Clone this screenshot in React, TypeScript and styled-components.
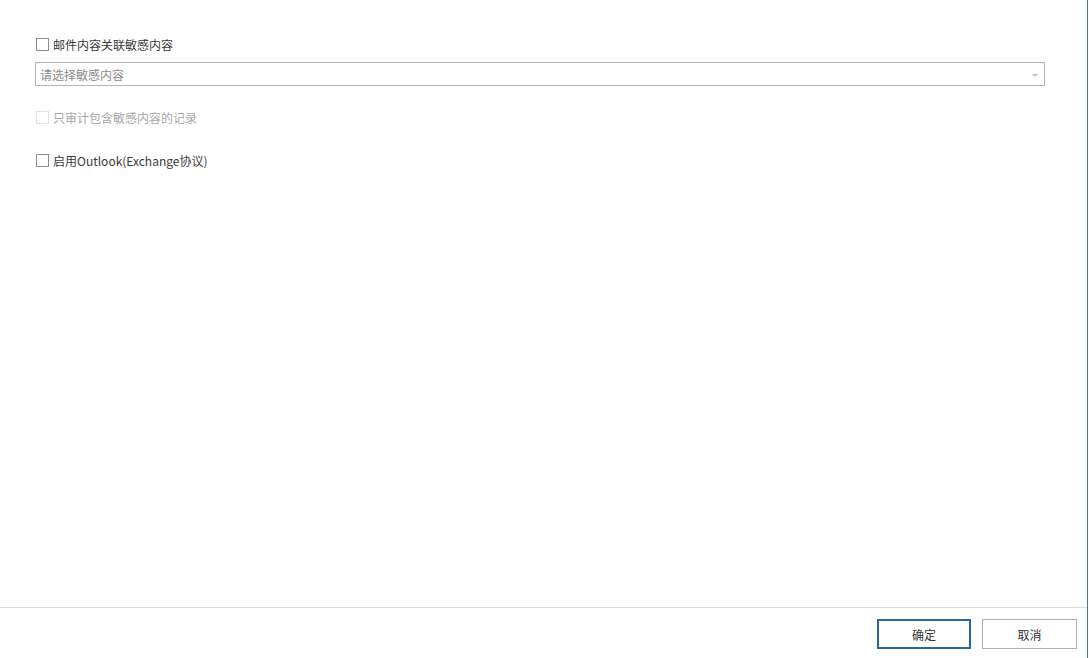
import React from "react";
import styled, { createGlobalStyle } from "styled-components";

const GlobalStyle = createGlobalStyle`
	html, body {
		margin: 0;
		padding: 0;
		background: #fff;
	}
	body {
		font-family: "Microsoft YaHei", "Noto Sans CJK SC", "Noto Sans", sans-serif;
		font-size: 12px;
		color: #333;
	}
	* {
		box-sizing: border-box;
	}
`;

const Frame = styled.div`
	width: 1089px;
	height: 658px;
	display: flex;
	background: #fff;
`;

const Dialog = styled.div`
	flex: 1;
	display: flex;
	flex-direction: column;
	border-right: 1px solid #3a78b0;
`;

const Spacer = styled.div`
	width: 1px;
`;

const Body = styled.div`
	flex: 1;
	padding: 36px 42px 0 35px;
	display: flex;
	flex-direction: column;
`;

const CheckRow = styled.label<{ $disabled?: boolean; $top: number }>`
	display: flex;
	align-items: center;
	gap: 4px;
	height: 17px;
	margin-top: ${(p) => p.$top}px;
	padding-left: 1px;
	color: ${(p) => (p.$disabled ? "#a8a8a8" : "#3a3a3a")};
	font-size: 12px;
	line-height: 17px;
`;

const Box = styled.span<{ $disabled?: boolean }>`
	width: 13px;
	height: 13px;
	border: 1px solid ${(p) => (p.$disabled ? "#e2e2e2" : "#8c8c8c")};
	background: #fff;
	flex: none;
`;

const Select = styled.div`
	margin-top: 9px;
	height: 24px;
	border: 1px solid #b5b5b5;
	display: flex;
	align-items: center;
	justify-content: space-between;
	padding: 0 6px 0 4px;
	color: #8a8a8a;
	font-size: 12px;
`;

const Arrow = styled.span`
	width: 0;
	height: 0;
	border-left: 3px solid transparent;
	border-right: 3px solid transparent;
	border-top: 3px solid #c4c4c4;
	margin-top: 2px;
`;

const Footer = styled.div`
	height: 51px;
	border-top: 1px solid #dcdcdc;
	display: flex;
	justify-content: flex-end;
	align-items: flex-start;
	gap: 11px;
	padding: 11px 10px 0 0;
`;

const Button = styled.button<{ $primary?: boolean }>`
	width: ${(p) => (p.$primary ? 94 : 95)}px;
	height: 30px;
	background: #fff;
	border: ${(p) => (p.$primary ? "2px solid #2a68a3" : "1px solid #b0b0b0")};
	color: #333;
	font-family: inherit;
	font-size: 12px;
	padding: 0;
	cursor: pointer;
`;

const App = () => {
	return (
		<Frame>
			<GlobalStyle />
			<Dialog>
				<Body>
					<CheckRow $top={0}>
						<Box />
						邮件内容关联敏感内容
					</CheckRow>
					<Select>
						<span>请选择敏感内容</span>
						<Arrow />
					</Select>
					<CheckRow $top={23} $disabled>
						<Box $disabled />
						只审计包含敏感内容的记录
					</CheckRow>
					<CheckRow $top={26}>
						<Box />
						启用Outlook(Exchange协议)
					</CheckRow>
				</Body>
				<Footer>
					<Button $primary>确定</Button>
					<Button>取消</Button>
				</Footer>
			</Dialog>
			<Spacer />
		</Frame>
	);
};

export default App;
